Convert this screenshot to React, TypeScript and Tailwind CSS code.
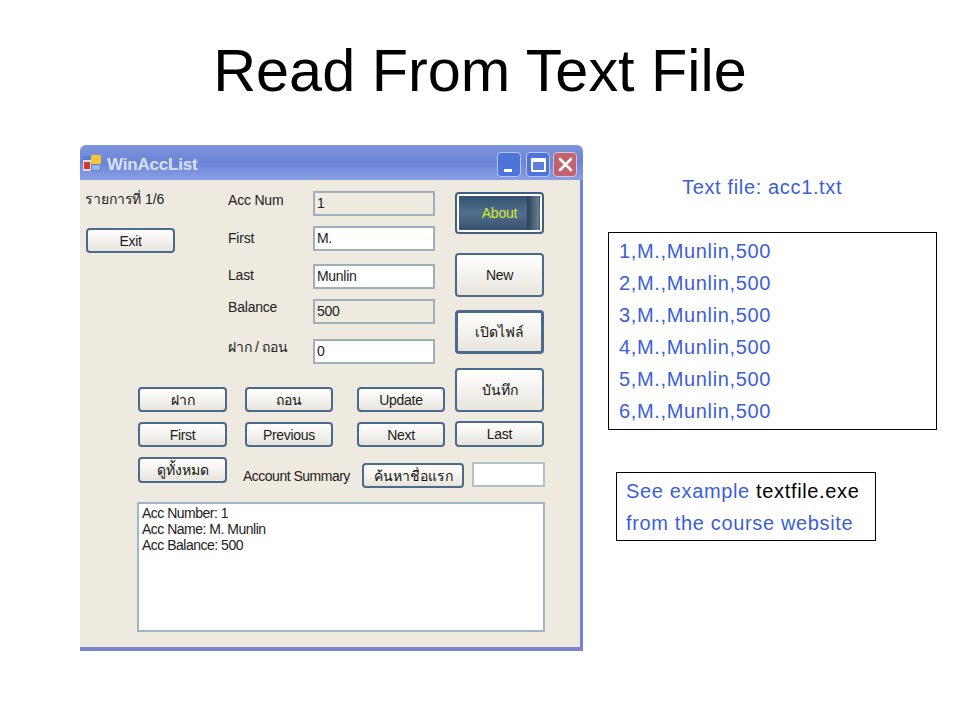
const formFont = "font-['Liberation_Sans','Noto_Sans',sans-serif]";

function WinButton({ label, className, thai }: { label: string; className: string; thai?: boolean }) {
  return (
    <button className={`flex items-center justify-center rounded-[4px] border-2 border-[#4a6b8e] bg-gradient-to-b from-[#ffffff] to-[#e8e5dc] text-[14px] leading-none ${thai ? "text-[#111]" : "tracking-[-0.3px] text-[#1c1c1c]"} ${className}`}>
      {label}
    </button>
  );
}

function Field({ label, value, className, labelClass, disabled }: { label: string; value: string; className: string; labelClass: string; disabled?: boolean }) {
  return (
    <div className={`flex h-[25px] ${className}`}>
      <span className={`w-[85px] text-[14px] leading-[16px] tracking-[-0.2px] text-[#222] ${labelClass}`}>{label}</span>
      <div className={`flex h-[25px] w-[122px] items-center border-2 border-[#9fb0bd] pl-[2px] text-[14px] tracking-[-0.3px] text-[#222] ${disabled ? "bg-[#efebe0]" : "bg-white"}`}>
        {value}
      </div>
    </div>
  );
}

function AppIcon() {
  return (
    <svg width="18" height="17" viewBox="0 0 18 17" className="mt-[1px] shrink-0">
      <rect x="0" y="1" width="18" height="15" rx="1" fill="#5c7fd6" />
      <rect x="8" y="0" width="10" height="9" rx="1" fill="#f4c534" />
      <rect x="0" y="5" width="8" height="11" fill="#d8dde8" />
      <rect x="1" y="7" width="6" height="7" fill="#d23a2e" />
      <rect x="9" y="10" width="8" height="5" fill="#9fb4e6" />
    </svg>
  );
}

function TitleBar() {
  return (
    <div className="flex h-[35px] items-center rounded-t-[6px] bg-gradient-to-b from-[#7e94dc] via-[#6b85d6] to-[#8aa0e4] pl-[3px] pr-[6px]">
      <AppIcon />
      <span className="ml-[6px] mt-[4px] text-[17px] font-bold tracking-[-0.2px] text-[#d9e1f6]">WinAccList</span>
      <div className="ml-auto flex pt-[4px]">
        <div className="flex h-[25px] w-[24px] items-end rounded-[4px] border border-[#b7c6ef] bg-[#4d74d8] pb-[4px] pl-[6px]">
          <div className="h-[3px] w-[8px] bg-white" />
        </div>
        <div className="ml-[5px] flex h-[25px] w-[24px] items-center justify-center rounded-[4px] border border-[#b7c6ef] bg-[#4d74d8]">
          <div className="h-[14px] w-[15px] border-2 border-t-[4px] border-white bg-[#5c7fe0]" />
        </div>
        <div className="ml-[3px] flex h-[25px] w-[24px] items-center justify-center rounded-[4px] border border-[#d6c3d3] bg-[#c0636f]">
          <svg width="15" height="15" viewBox="0 0 15 15">
            <path d="M2 2 L13 13 M13 2 L2 13" stroke="#fff" strokeWidth="2.6" strokeLinecap="round" />
          </svg>
        </div>
      </div>
    </div>
  );
}

function AboutButton() {
  return (
    <div className="flex h-[42px] w-[89px] rounded-[4px] border-2 border-[#3f5f80] bg-white p-[2px]">
      <div className="relative flex h-full w-full items-center justify-center bg-gradient-to-b from-[#34506e] via-[#52708e] to-[#38526e] text-[14px] leading-none tracking-[-0.2px] text-[#d6e832]">
        <span>About</span>
        <div className="absolute bottom-0 right-[1px] top-0 w-[12px] bg-gradient-to-r from-[#2c4058] to-[#6a8096]" />
      </div>
    </div>
  );
}

export default function App() {
  return (
    <div className="h-[720px] w-[960px] overflow-hidden bg-white font-['Liberation_Sans',sans-serif]">
      <h1 className="h-[145px] pt-[36px] text-center text-[59.4px] leading-[69px] text-black">Read From Text File</h1>
      <div className="flex">
        <div className="ml-[80px] h-[506px] w-[503px] shrink-0">
          <div className={`flex h-full flex-col rounded-t-[6px] ${formFont}`}>
            <TitleBar />
            <div className="flex flex-1 flex-col border-b-[4px] border-r-[3px] border-b-[#7c84d0] border-r-[#6f85d6] bg-[#eeeadf]">
              <div className="flex">
                <div className="w-[375px]">
                  <div className="flex h-[207px]">
                    <div className="w-[148px] pl-[5px]">
                      <div className="mt-[11px] h-[16px] text-[14px] leading-[16px] tracking-[-0.1px] text-[#222]">รายการที่ 1/6</div>
                      <WinButton label="Exit" className="ml-[1px] mt-[21px] h-[25px] w-[89px]" />
                    </div>
                    <div>
                      <Field className="mt-[11px]" label="Acc Num" value="1" labelClass="pt-[1px]" disabled />
                      <Field className="mt-[10px]" label="First" value="M." labelClass="pt-[4px]" />
                      <Field className="mt-[13px]" label="Last" value="Munlin" labelClass="pt-[3px]" />
                      <Field className="mt-[10px]" label="Balance" value="500" labelClass="" disabled />
                      <Field className="mt-[15px]" label="ฝาก / ถอน" value="0" labelClass="" />
                    </div>
                  </div>
                  <div className="ml-[58px] flex gap-[18px]">
                    <WinButton thai label="ฝาก" className="h-[25px] w-[89px]" />
                    <WinButton thai label="ถอน" className="h-[25px] w-[88px]" />
                    <WinButton label="Update" className="ml-[6px] h-[25px] w-[88px]" />
                  </div>
                  <div className="ml-[58px] mt-[10px] flex gap-[18px]">
                    <WinButton label="First" className="h-[25px] w-[89px]" />
                    <WinButton label="Previous" className="h-[25px] w-[88px]" />
                    <WinButton label="Next" className="ml-[6px] h-[25px] w-[88px]" />
                  </div>
                </div>
                <div className="flex flex-col pt-[12px]">
                  <AboutButton />
                  <WinButton label="New" className="mt-[19px] h-[44px] w-[89px]" />
                  <WinButton thai label="เปิดไฟล์" className="mt-[13px] h-[44px] w-[89px] border-[3px] border-[#3f6fa8]" />
                  <WinButton thai label="บันทึก" className="mt-[14px] h-[44px] w-[89px]" />
                  <WinButton label="Last" className="mt-[9px] h-[26px] w-[89px]" />
                </div>
              </div>
              <div className="ml-[58px] mt-[9px] flex items-start">
                <WinButton thai label="ดูทั้งหมด" className="mt-px h-[26px] w-[89px]" />
                <span className="ml-[16px] mt-[12px] w-[119px] text-[14px] leading-[16px] tracking-[-0.5px] text-[#222]">Account Summary</span>
                <WinButton thai label="ค้นหาชื่อแรก" className="mt-[7px] h-[25px] w-[102px]" />
                <div className="ml-[8px] mt-[6px] h-[25px] w-[73px] border-2 border-[#b4c0c8] bg-white" />
              </div>
              <div className="ml-[57px] mt-[14px] h-[130px] w-[408px] border-2 border-[#9fb4c4] bg-white px-[3px] py-[1px] text-[14px] leading-[16px] tracking-[-0.5px] text-[#222]">
                <div>Acc Number: 1</div>
                <div>Acc Name: M. Munlin</div>
                <div>Acc Balance: 500</div>
              </div>
            </div>
          </div>
        </div>
        <div className="ml-[25px] flex w-[329px] flex-col text-[20px] leading-[32px] tracking-[0.65px] text-[#3a5fd9]">
          <div className="mt-[26px] h-[61px] pl-[74px]">Text file: acc1.txt</div>
          <div className="h-[198px] border border-black pl-[10px] pt-[2px]">
            <div>1,M.,Munlin,500</div>
            <div>2,M.,Munlin,500</div>
            <div>3,M.,Munlin,500</div>
            <div>4,M.,Munlin,500</div>
            <div>5,M.,Munlin,500</div>
            <div>6,M.,Munlin,500</div>
          </div>
          <div className="ml-[8px] mt-[42px] h-[69px] w-[260px] border border-black pl-[9px] pt-[2px]">
            <div>See example <span className="text-black">textfile.exe</span></div>
            <div>from the course website</div>
          </div>
        </div>
      </div>
    </div>
  );
}
